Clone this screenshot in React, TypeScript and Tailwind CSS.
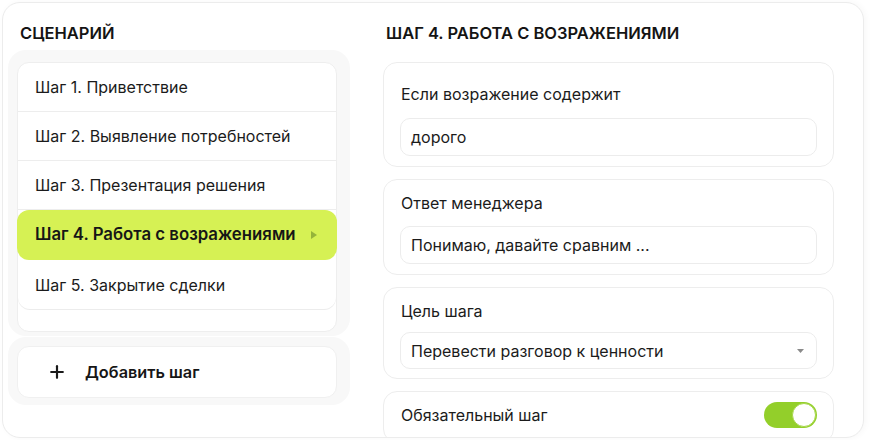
import React from 'react';
import { Plus } from 'lucide-react';

const steps = [
    'Шаг 1. Приветствие',
    'Шаг 2. Выявление потребностей',
    'Шаг 3. Презентация решения',
    'Шаг 4. Работа с возражениями',
    'Шаг 5. Закрытие сделки',
];

const StepItem = ({ title, active, last }: { title: string; active: boolean; last: boolean }) => {
    if (active) {
        return (
            <div className="h-[50px] -mx-px flex items-center justify-between rounded-[12px] bg-[#d6f154] pl-[18px] pr-[20px]">
                <span className="text-[16.8px] font-semibold text-[#161616]">{title}</span>
                <svg width="6" height="8" viewBox="0 0 6 8">
                    <path d="M0 0 L6 4 L0 8 Z" fill="#95b43a" />
                </svg>
            </div>
        );
    }
    return (
        <div
            className={`h-[49px] flex items-center px-[17px] ${last ? 'rounded-b-[12px] shadow-[0_1px_0_#ececec]' : 'border-b border-[#ededed]'}`}
        >
            <span className="text-[16px] text-[#1b1b1b]">{title}</span>
        </div>
    );
};

const FieldCard = ({ children, className }: { children: React.ReactNode; className?: string }) => (
    <div className={`rounded-[14px] border border-[#ededed] bg-white px-[16px] ${className ?? ''}`}>{children}</div>
);

const App = () => {
    const activeIndex = 3;

    return (
        <div className="w-[880px] h-[440px] bg-white p-[2px] font-['Inter','Noto_Sans',sans-serif]">
            <div className="w-[862px] h-[436px] overflow-hidden rounded-[18px] border border-[#ececec] bg-white shadow-[2px_0_6px_rgba(0,0,0,0.03)] flex pl-[5px] pt-[20px]">
                {/* Сценарий */}
                <div className="w-[342px] flex flex-col">
                    <h2 className="pl-[12px] h-[20px] leading-[20px] text-[16.5px] font-semibold text-[#141414]">СЦЕНАРИЙ</h2>
                    <div className="mt-[7px] rounded-[18px] bg-[#f8f8f8] pl-[9px] pr-[13px] pt-[12px] pb-[4px]">
                        <div className="h-[270px] rounded-[12px] border border-[#eeeeee] bg-white">
                            {steps.map((s, i) => (
                                <StepItem key={s} title={s} active={i === activeIndex} last={i === steps.length - 1} />
                            ))}
                        </div>
                    </div>
                    <div className="mt-px rounded-[18px] bg-[#f8f8f8] pl-[9px] pr-[13px] pt-[9px] pb-[7px]">
                        <button className="w-full h-[52px] flex items-center rounded-[12px] border border-[#f0f0f0] bg-white pl-[29px]">
                            <Plus size={20} strokeWidth={2.6} className="text-[#1a1a1a]" />
                            <span className="ml-[18px] text-[16.3px] font-semibold text-[#161616]">Добавить шаг</span>
                        </button>
                    </div>
                </div>

                {/* Шаг 4 */}
                <div className="ml-[33px] w-[451px] flex flex-col">
                    <h2 className="pl-[3px] h-[20px] leading-[20px] text-[16.5px] font-semibold text-[#141414]">ШАГ 4. РАБОТА С ВОЗРАЖЕНИЯМИ</h2>
                    <div className="mt-[19px] flex flex-col gap-[12px]">
                        <FieldCard className="pt-[21px] pb-[10px]">
                            <label className="block pl-px h-[20px] leading-[20px] text-[16px] text-[#1b1b1b]">Если возражение содержит</label>
                            <div className="mt-[14px] h-[38px] flex items-center rounded-[10px] border border-[#ececec] px-[10px] text-[16px] text-[#1b1b1b]">
                                дорого
                            </div>
                        </FieldCard>
                        <FieldCard className="pt-[13px] pb-[10px]">
                            <label className="block pl-px h-[20px] leading-[20px] text-[16px] text-[#1b1b1b]">Ответ менеджера</label>
                            <div className="mt-[13px] h-[38px] flex items-center rounded-[10px] border border-[#ececec] px-[10px] text-[16px] text-[#1b1b1b]">
                                Понимаю, давайте сравним ...
                            </div>
                        </FieldCard>
                        <FieldCard className="pt-[13px] pb-[9px]">
                            <label className="block pl-px h-[20px] leading-[20px] text-[16px] text-[#1b1b1b]">Цель шага</label>
                            <div className="mt-[11px] h-[37px] flex items-center justify-between rounded-[10px] border border-[#ececec] pl-[10px] pr-[12px] text-[16px] text-[#1b1b1b]">
                                <span>Перевести разговор к ценности</span>
                                <svg width="7" height="4" viewBox="0 0 7 4">
                                    <path d="M0 0 L7 0 L3.5 4 Z" fill="#8a8a8a" />
                                </svg>
                            </div>
                        </FieldCard>
                        <FieldCard className="h-[52px] flex items-center justify-between">
                            <span className="pl-px text-[16px] text-[#1b1b1b] -mt-[5px]">Обязательный шаг</span>
                            <div className="-mt-[5px] w-[53px] h-[26px] rounded-full bg-[#93cf2a] flex items-center justify-end pr-[1px]">
                                <div className="w-[24px] h-[24px] rounded-full bg-white border border-[#a6d64a]" />
                            </div>
                        </FieldCard>
                    </div>
                </div>
            </div>
        </div>
    );
};

export default App;
